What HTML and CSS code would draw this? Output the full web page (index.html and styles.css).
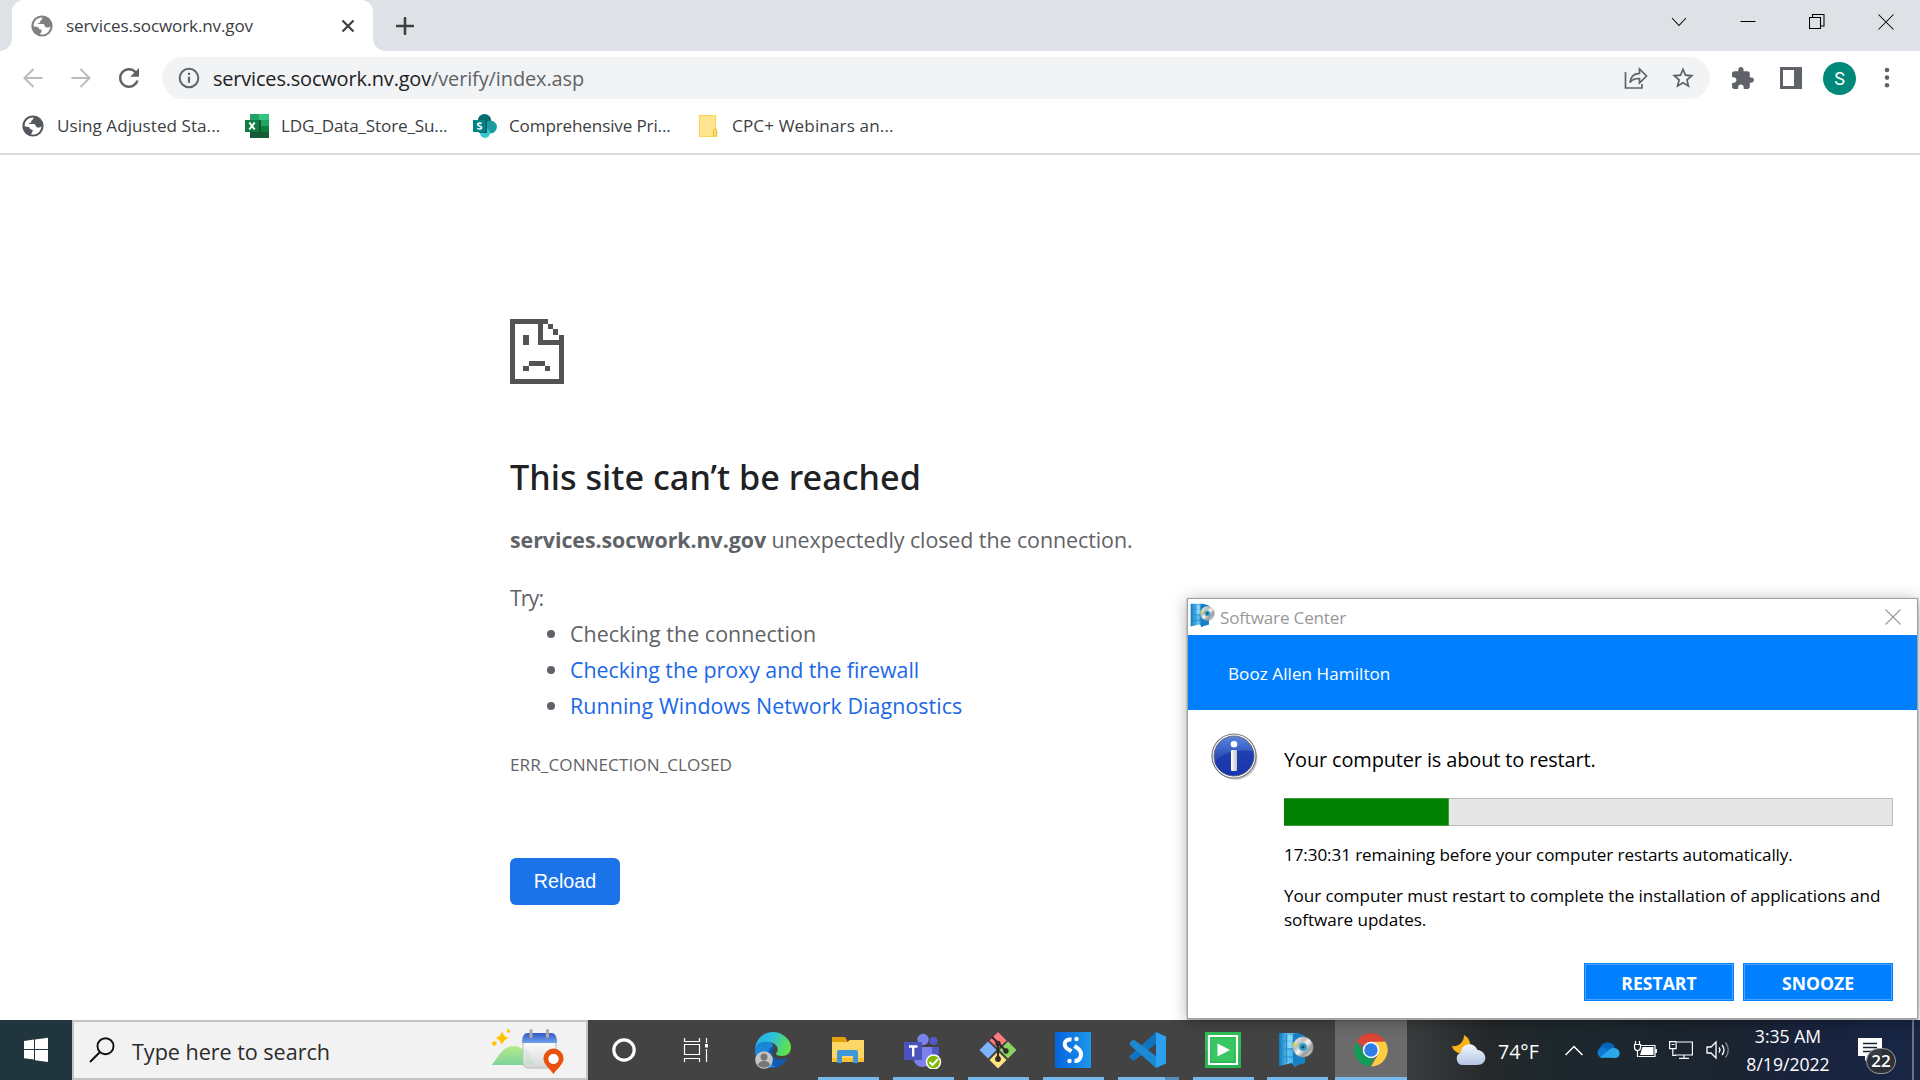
FILE: index.html
```
<!DOCTYPE html>
<html lang="en">
<head>
<meta charset="utf-8">
<title>services.socwork.nv.gov</title>
<link rel="stylesheet" href="styles.css">
</head>
<body>
<svg class="defs" width="0" height="0" aria-hidden="true">
  <defs>
    <symbol id="globe" viewBox="0 0 22 22">
      <circle cx="11" cy="11" r="10.6" fill="currentColor"/>
      <path fill="#fff" d="M2.6 11.3C2.5 6.4 6.2 2.7 10.8 2.6c1 .4.6 1.500-.2 2.200L9.200 6v1.700H7.700L6.600 9h5.200c1.300 0 1.800.9 1.800 2.100l1.600 1.300h2.200c.9 0 1.500-.6 2-1.200-.2 4.800-3.700 8.300-8.400 8.300-.9 0-1.600-.1-1.900-.3.300-1.800 1.500-1.500 1.500-3v-1.500c-1.900 0-3.200-.9-3.200-2.400z"/>
    </symbol>
    <linearGradient id="server" x1="0" x2="1"><stop offset="0" stop-color="#0a78bd"/><stop offset=".35" stop-color="#63c3f0"/><stop offset="1" stop-color="#1585cd"/></linearGradient>
    <linearGradient id="disc" x1="0" y1="0" x2="1" y2="1"><stop offset="0" stop-color="#fff"/><stop offset=".35" stop-color="#b9bbbd"/><stop offset=".5" stop-color="#f5f5f5"/><stop offset=".7" stop-color="#989b9e"/><stop offset="1" stop-color="#f0f0f0"/></linearGradient>
    <symbol id="software" viewBox="0 0 36 36">
      <path fill="url(#server)" d="M1 1h18l8 3v27l-8 2-2 2-3-4L1 34z"/>
      <path fill="#1580c6" d="M15 2l4-1 8 3v27l-8 2-2 2-2-4z"/>
      <path stroke="#1f8fcf" stroke-width="1.200" fill="none" d="M2 9h13M2 17h13M2 25h13M8.500 2v29"/>
      <path fill="#bdebff" d="M9.500 3h5v13h-5z" opacity=".5"/>
      <circle cx="25" cy="15" r="10.200" fill="url(#disc)" stroke="#8d9194" stroke-width=".6"/>
      <path fill="#c8e22e" d="M15.500 11l4 1-1 2-3.500 0z"/>
      <circle cx="25" cy="15" r="4" fill="#31a0c9"/><circle cx="25" cy="15" r="1.600" fill="#1c4c66"/>
    </symbol>
  </defs>
</svg>

<div class="browser">
  <header class="tabstrip">
    <div class="tab">
      <svg class="tab-icon" width="22" height="22"><use href="#globe"/></svg>
      <span class="tab-title">services.socwork.nv.gov</span>
      <svg class="tab-close" width="14" height="14" viewBox="0 0 14 14"><path d="M1.500 1.500l11 11m0-11l-11 11" stroke="#3c4043" stroke-width="2.200"/></svg>
    </div>
    <svg class="new-tab" width="18" height="18" viewBox="0 0 18 18"><path d="M9 1v16M1 9h16" stroke="#3c4043" stroke-width="2.600" stroke-linecap="round"/></svg>
    <div class="window-controls">
      <svg width="16" height="16" viewBox="0 0 16 16"><path d="M1 4l7 7.500L15 4"/></svg>
      <svg width="16" height="16" viewBox="0 0 16 16"><path d="M.5 7.500h15"/></svg>
      <svg width="16" height="16" viewBox="0 0 16 16"><path d="M.5 3.500h11v11H.5zM3.500 3.500v-3h11.500v11.500h-3.500"/></svg>
      <svg width="16" height="16" viewBox="0 0 16 16"><path d="M.5.5l15 15m0-15l-15 15"/></svg>
    </div>
  </header>

  <div class="toolbar">
    <div class="nav">
      <svg width="20" height="20" viewBox="0 0 20 20" fill="none" stroke="#b9bbbe" stroke-width="2"><path d="M19.500 10H2M10.500 1L1.500 10l9 9"/></svg>
      <svg width="20" height="20" viewBox="0 0 20 20" fill="none" stroke="#b9bbbe" stroke-width="2"><path d="M.5 10H18M9.500 1l9 9-9 9"/></svg>
      <svg width="30" height="30" viewBox="0 0 24 24"><path fill="#5f6368" d="M17.650 6.350C16.200 4.900 14.210 4 12 4c-4.420 0-7.990 3.580-7.990 8s3.570 8 7.990 8c3.730 0 6.840-2.550 7.730-6h-2.080c-.82 2.330-3.040 4-5.650 4-3.310 0-6-2.690-6-6s2.690-6 6-6c1.660 0 3.140.69 4.220 1.780L13 11h7V4l-2.350 2.350z"/></svg>
    </div>
    <div class="omnibox">
      <svg width="22" height="22" viewBox="0 0 22 22"><circle cx="11" cy="11" r="9.300" fill="none" stroke="#5f6368" stroke-width="2"/><path d="M11 9.800v6M11 5.800v2.200" stroke="#5f6368" stroke-width="2.200"/></svg>
      <span class="url">services.socwork.nv.gov<span class="path">/verify/index.asp</span></span>
      <svg class="share" width="24" height="24" viewBox="0 0 24 24" fill="none" stroke="#5f6368" stroke-width="1.700"><path d="M1.500 6v16h16.500v-4M6 16.500C6.500 10.500 10 7.500 15.500 7.300V3l7 7-7 7v-4.500C11 12.300 8 13.500 6 16.500z"/></svg>
      <svg class="star" width="26" height="26" viewBox="0 0 24 24"><path fill="#5f6368" d="M22 9.240l-7.190-.62L12 2 9.190 8.630 2 9.240l5.460 4.730L5.820 21 12 17.270 18.180 21l-1.630-7.030L22 9.240zM12 15.400l-3.760 2.270 1-4.280-3.320-2.880 4.380-.38L12 6.100l1.710 4.040 4.380.38-3.320 2.880 1 4.280L12 15.400z"/></svg>
    </div>
    <div class="actions">
      <svg width="24" height="24" viewBox="1 0 23 23"><path fill="#5f6368" d="M20.500 11H19V7c0-1.100-.9-2-2-2h-4V3.500C13 2.120 11.880 1 10.500 1S8 2.120 8 3.500V5H4c-1.100 0-1.990.9-1.990 2v3.800H3.500c1.490 0 2.700 1.210 2.700 2.700s-1.210 2.700-2.700 2.700H2V20c0 1.100.9 2 2 2h3.800v-1.500c0-1.490 1.210-2.700 2.700-2.700 1.490 0 2.700 1.210 2.700 2.700V22H17c1.100 0 2-.9 2-2v-4h1.500c1.380 0 2.500-1.120 2.500-2.500S21.880 11 20.500 11z"/></svg>
      <svg width="22" height="22" viewBox="0 0 22 22"><path fill="#5f6368" d="M0 0h22v22H0z"/><path fill="#fff" d="M3 3h11v16H3z"/></svg>
      <span class="avatar">S</span>
      <svg width="22" height="22" viewBox="0 0 22 22" fill="#5f6368"><circle cx="11" cy="3" r="2.300"/><circle cx="11" cy="10.600" r="2.300"/><circle cx="11" cy="18.200" r="2.300"/></svg>
    </div>
  </div>

  <nav class="bookmarks">
    <a class="bookmark"><svg class="dark-globe" width="24" height="22" viewBox="0 0 24 22"><use href="#globe" x="1" width="22" height="22"/></svg><span>Using Adjusted Sta...</span></a>
    <a class="bookmark tight"><svg width="24" height="24" viewBox="0 0 24 24"><path fill="#21a366" d="M5 0h9v6H5z"/><path fill="#33c481" d="M14 0h10v6H14z"/><path fill="#107c41" d="M5 6h9v12H5z"/><path fill="#21a366" d="M14 6h10v6H14z"/><path fill="#107c41" d="M14 12h10v6H14z"/><path fill="#185c37" d="M5 18h19v6H5z"/><path fill="#0b5a2d" d="M5 6h11v13H5z"/><path fill="#107c41" d="M0 6h14v12H0z"/><path d="M4.300 8.500l5.400 7m0-7l-5.400 7" stroke="#fff" stroke-width="2"/></svg><span>LDG_Data_Store_Su...</span></a>
    <a class="bookmark tight"><svg width="24" height="24" viewBox="0 0 24 24"><circle cx="11.500" cy="6.800" r="6.800" fill="#036c70"/><circle cx="17.500" cy="13" r="6.400" fill="#1a9ba1"/><circle cx="12" cy="19" r="5" fill="#37c6d0"/><path fill="#075f63" d="M6 6h8v13H6z"/><path fill="#038387" d="M0 6h12.500v12H0z"/><path d="M8.600 9.600C7.400 8.800 4.600 8.800 4.600 10.500c0 1.900 4 1.200 4 3.200 0 1.700-2.900 1.600-4.300.7" fill="none" stroke="#fff" stroke-width="1.600"/></svg><span>Comprehensive Pri...</span></a>
    <a class="bookmark wide"><svg width="24" height="24" viewBox="0 0 24 24"><path fill="#ffe591" stroke="#fcd757" stroke-width="1.200" d="M3.600 1.600h16v20.800h-16z"/><path fill="#f9e27f" stroke="#e9c038" stroke-width="1.200" d="M17.600 16.500q0-1.500 1.500-1.500t1.500 1.500v5.500h-3z"/></svg><span>CPC+ Webinars an...</span></a>
  </nav>

  <main class="error-page">
    <svg class="sad-page" width="55" height="65" viewBox="0 0 55 65" shape-rendering="crispEdges" fill="#535353"><path d="M0 0h38v5H5v55h44V26H28V5h5v16h16v-5h5v49H0zM38 5h5v5h-5zM43 10h5v6h-5zM13 16h6v10h-6zM19 42h16v5H19zM13 47h6v5h-6zM35 47h5v5h-5z"/></svg>
    <h1>This site can’t be reached</h1>
    <p class="summary"><strong>services.socwork.nv.gov</strong> unexpectedly closed the connection.</p>
    <p class="try">Try:</p>
    <ul>
      <li>Checking the connection</li>
      <li><a class="proxy">Checking the proxy and the firewall</a></li>
      <li><a class="diag">Running Windows Network Diagnostics</a></li>
    </ul>
    <p class="code">ERR_CONNECTION_CLOSED</p>
    <button class="reload">Reload</button>
  </main>
</div>

<section class="dialog">
  <div class="dialog-title">
    <svg width="25" height="25"><use href="#software"/></svg>
    <span>Software Center</span>
    <svg class="dialog-close" width="16" height="16" viewBox="0 0 16 16"><path d="M.5.5l15 15m0-15l-15 15" stroke="#999" stroke-width="1.100"/></svg>
  </div>
  <div class="dialog-org">Booz Allen Hamilton</div>
  <div class="dialog-body">
    <svg class="info" width="48" height="50" viewBox="0 0 48 50">
      <defs><linearGradient id="ib" x1="0" y1="0" x2="0" y2="1"><stop offset="0" stop-color="#5b85e0"/><stop offset=".5" stop-color="#2c51b8"/><stop offset="1" stop-color="#2036c0"/></linearGradient><linearGradient id="is"><stop offset="0" stop-color="#fff"/><stop offset="1" stop-color="#c4c4c4"/></linearGradient></defs>
      <ellipse cx="24.500" cy="25" rx="22" ry="22" fill="#000" opacity=".2"/>
      <circle cx="23" cy="23" r="22" fill="#fff" stroke="#777" stroke-width="1.200"/>
      <circle cx="23" cy="23" r="20" fill="url(#ib)" stroke="#666b80" stroke-width="1"/>
      <path d="M3.500 29C10 20 28 15 42.500 18.500A20 20 0 0 1 23 42.500C13 42.500 5 36 3.500 29z" fill="#1632a8" opacity=".65"/>
      <circle cx="23" cy="11.200" r="3.300" fill="#fff"/><rect x="20" y="17" width="6" height="21" rx="1" fill="url(#is)"/>
    </svg>
    <div class="dialog-content">
      <p class="headline">Your computer is about to restart.</p>
      <div class="progress"><div class="progress-fill"></div></div>
      <p class="remaining">17:30:31 remaining before your computer restarts automatically.</p>
      <p class="reason">Your computer must restart to complete the installation of applications and software updates.</p>
      <div class="dialog-buttons"><button>RESTART</button><button>SNOOZE</button></div>
    </div>
  </div>
</section>

<footer class="taskbar">
  <div class="start"><svg width="26" height="26" viewBox="0 0 26 26" fill="#fff"><path d="M1 4l10-1.400V12H1zM12 2.500L25 .8V12H12zM1 13h10v9.500L1 21.200zM12 13h13v12l-13-1.700z"/></svg></div>
  <div class="search">
    <svg width="26" height="26" viewBox="0 0 26 26" fill="none" stroke="#111" stroke-width="1.900"><circle cx="16.500" cy="9.200" r="8"/><path d="M11 15L1 25"/></svg>
    <span>Type here to search</span>
    <svg class="highlight" width="74" height="48" viewBox="0 0 74 48">
      <defs><linearGradient id="hill" x1="0" y1="0" x2="0" y2="1"><stop offset="0" stop-color="#b6ea8a"/><stop offset="1" stop-color="#7cd49a"/></linearGradient><linearGradient id="cal" x1="0" y1="0" x2="0" y2="1"><stop offset="0" stop-color="#3556c8"/><stop offset="1" stop-color="#6fa3ee"/></linearGradient><linearGradient id="paper" x1="0" y1="0" x2="0" y2="1"><stop offset="0" stop-color="#fff"/><stop offset="1" stop-color="#d6d6d6"/></linearGradient></defs>
      <path fill="url(#hill)" d="M0 38C9 24 14 19 22 19s15 8 22 19z"/>
      <rect x="31" y="13" width="33" height="28" rx="5" fill="url(#paper)" stroke="#bcbcbc"/>
      <path d="M33 20c4 6 7 11 10 18H33z" fill="#a9e0b4" opacity=".3"/>
      <path fill="url(#cal)" d="M30 16c0-7 2-10 6-10h23c4 0 6 3 6 10z"/>
      <path d="M39 3.500v6M55.500 3.500v6" stroke="#a9a9a9" stroke-width="3.200" stroke-linecap="round"/>
      <path fill="#ffc400" d="M10 4q1.500 6 7 7-5.500 1.500-7 7-1.500-5.500-7-7 5.500-1 7-7z"/><circle cx="16.500" cy="4" r="1.700" fill="#ffc400"/><circle cx="2.300" cy="16.500" r="2.300" fill="#ffc400"/>
      <path fill="#e8520e" fill-rule="evenodd" d="M61.500 47C57 41 51.500 37 51.500 31.500a10 10 0 0 1 20 0C71.500 37 66 41 61.500 47zm0-20a5 5 0 1 0 0 10 5 5 0 0 0 0-10z"/><circle cx="61.500" cy="32" r="5" fill="#fff"/>
    </svg>
  </div>
  <div class="slot"><svg width="24" height="24" viewBox="0 0 24 24"><circle cx="12" cy="12" r="10.200" fill="none" stroke="#fff" stroke-width="3.200"/></svg></div>
  <div class="slot"><svg width="26" height="26" viewBox="0 0 26 26" fill="none" stroke="#fff" stroke-width="1.200"><path d="M1.500 1v3.500h15V1M1.500 7.500h15v10h-15zM1.500 25v-3.500h15V25M23.500 1v5M23.500 12v13"/><path fill="#fff" stroke="none" d="M22 7h3v3.500h-3z"/></svg></div>
  <div class="apps">
    <div class="app"><svg width="38" height="38" viewBox="0 0 38 38">
      <defs><linearGradient id="ed" x1="0" x2="1" y2=".3"><stop offset="0" stop-color="#2aa9ee"/><stop offset=".5" stop-color="#2bbfdc"/><stop offset="1" stop-color="#5fe04f"/></linearGradient></defs>
      <path fill="#0f5bb5" d="M1 19C1 9 9 9 14 10l6 6c-5 8 1 16 14 11-5 7-10 10-16 10C8 37 1 29 1 19z"/>
      <path fill="#1a86d8" d="M1 20c0-7 6-10 11-10 4 0 7 2 7 5-6 2-7 14 2 21C9 38 1 30 1 20z"/>
      <path fill="url(#ed)" d="M1 18C2 8 9 1 19 1c10 0 18 8 18 15 0 6-4 9-9 9-6 0-7-2-5-4 2-3 0-9-8-10C8 10 3 12 1 18z"/>
      <circle cx="10" cy="29" r="8.800" fill="#c7c5c2"/><circle cx="10" cy="26" r="3.500" fill="#777"/><path fill="#777" d="M4 34.500c0-6 12-6 12 0-3 2.800-9 2.800-12 0z"/></svg></div>
    <div class="app running"><svg width="34" height="28" viewBox="0 0 34 28"><path fill="#e3a008" d="M1 1h13l2 3v5H1z"/><path fill="#ffd767" d="M1 6h15l3-2h14v22H1z"/><path fill="#fbc02d" d="M1 22h32v4H1z"/><path fill="#3e98d9" d="M6 27V16q0-2 2-2h17q2 0 2 2v11h-5v-7H11v7z"/></svg></div>
    <div class="app running"><svg width="40" height="38" viewBox="0 0 40 38">
      <circle cx="30.500" cy="10" r="4" fill="#5059c9"/><circle cx="20" cy="8.500" r="5.700" fill="#7b83eb"/><path fill="#5059c9" d="M26 16h10v11q-3 6-10 4z"/><path fill="#7b83eb" d="M11 16h18v12c0 10-18 11-18 0z"/><path fill="#4b53bc" d="M1 11h18v18H1z"/><path d="M6 15.500h8.500M10.200 15.500v10" stroke="#fff" stroke-width="2.400"/><circle cx="30.500" cy="31" r="7" fill="#7fba00" stroke="#fff" stroke-width="1.500"/><path d="M26.500 31l3 3 5.500-6" stroke="#fff" stroke-width="2" fill="none"/></svg></div>
    <div class="app running"><svg width="38" height="38" viewBox="0 0 38 38">
      <path fill="#ff7a7d" d="M19 1l8.500 8.500-8.500 8-8.500-8z"/><path fill="#80b3ff" d="M9 10.500l8.500 8.500L9 27.500.5 19z"/><path fill="#ffe680" d="M19 20.500l8.500 8.500-8.500 8.500-8.500-8.500z"/><path fill="#8dd35f" d="M29 10.500l8.500 8.500-8.500 8.500-8.500-8.500z"/><path stroke="#2f2a2b" stroke-width="2.200" fill="none" d="M13 6l6 6v17M19 12l8 8"/><g fill="#2f2a2b"><circle cx="19" cy="12.500" r="2.700"/><circle cx="27" cy="20" r="2.700"/><circle cx="19" cy="28" r="2.900"/></g></svg></div>
    <div class="app running"><svg width="36" height="36" viewBox="0 0 36 36"><defs><linearGradient id="st" x1="0" x2="1"><stop offset="0" stop-color="#0664dd"/><stop offset="1" stop-color="#1d97ec"/></linearGradient></defs><path fill="url(#st)" d="M0 0h36v36H0z"/><path d="M16.500 7.500c-9-1-8 8-3 10l3 1.800M19.500 14l3.500 2.500c6 5 2 13-3.500 12.500" fill="none" stroke="#fff" stroke-width="4"/><circle cx="21.500" cy="7" r="2.200" fill="#fff"/><circle cx="14.500" cy="29" r="2.200" fill="#fff"/></svg></div>
    <div class="app running split"><svg width="38" height="38" viewBox="0 0 38 38"><path fill="#0f74bd" d="M27 1v12L6 29q-1.500 1-3 0l-2-2q-1-1.500 0-2.500z"/><path fill="#1b8ad3" d="M27 37V25L6 9.500q-1.500-1-3 0l-2 2q-1 1.500 0 2.500z"/><path fill="#2c9fee" d="M27 1l10 4.500v27L27 37z"/></svg></div>
    <div class="app running"><svg width="36" height="36" viewBox="0 0 36 36"><path fill="#2dbe56" d="M0 0h36v36H0z"/><path fill="#24a94a" d="M0 18h36v18H0z" opacity=".5"/><path fill="none" stroke="#fff" stroke-width="2.200" d="M4 4h28v28H4z"/><path fill="#38c763" d="M6.500 6.500h23v23h-23z"/><path fill="#fff" d="M12.500 11.500L25 18l-12.500 6.500z"/></svg></div>
    <div class="app running software"><svg width="36" height="36"><use href="#software"/></svg></div>
    <div class="app active"><svg width="34" height="34" viewBox="0 0 34 34"><path fill="#db4437" d="M17 17L2.600 8.700A16.600 16.600 0 0 1 31.400 8.700z"/><path fill="#ffcd40" d="M17 8.700h14.400A16.600 16.600 0 0 1 17 33.600l7-12z"/><path fill="#0f9d58" d="M2.600 8.700L10 21l7 4.500 3-.5-4.500 8.500A16.600 16.600 0 0 1 2.600 8.700z"/><circle cx="17" cy="17" r="8.300" fill="#fff"/><circle cx="17" cy="17" r="6.700" fill="#2f7de9"/></svg></div>
  </div>
  <div class="weather">
    <svg width="34" height="31" viewBox="0 0 34 31"><defs><linearGradient id="cl" x1="0" y1="0" x2="0" y2="1"><stop offset="0" stop-color="#f2f6fc"/><stop offset="1" stop-color="#b3c5e4"/></linearGradient></defs><path fill="#f9b517" d="M12 0c8 4 8 14 1 18C7 20 1 16 0 11c7 1 12-4 12-11z"/><path fill="url(#cl)" d="M10 30a6.500 6.500 0 0 1-1-12.500C9 8 22 6 25.500 15c10 1 11 15-.5 15z"/></svg>
    <span>74°F</span>
  </div>
  <div class="tray">
    <svg width="18" height="11" viewBox="0 0 18 11" fill="none" stroke="#fff" stroke-width="1.500"><path d="M.5 10L9 1.500 17.500 10"/></svg>
    <svg width="24" height="16" viewBox="0 0 24 16"><path fill="#0364b8" d="M4 6C6-1 16-1 19 5l-8 6z"/><path fill="#0f78d4" d="M6 16a5.500 5.500 0 0 1-1-10.500c5-1 8 3 15 8z"/><path fill="#28a8ea" d="M4 15.500L14 7c4-2 5-1 5.500-.5 5 0 6 9 0 9.500z"/></svg>
    <svg width="24" height="18" viewBox="0 0 24 18" fill="none" stroke="#fff" stroke-width="1.200"><path d="M8 4.500h14v11H5.500M23.300 8v4M1.500 3.500h6v3q0 3-3 3t-3-3zM2.500 0v3M6.500 0v3M4.500 9.500V16"/><path fill="#fff" stroke="none" d="M9.500 6H20.500v8H7z"/></svg>
    <svg width="24" height="18" viewBox="0 0 24 18" fill="none" stroke="#fff" stroke-width="1.200"><path d="M8 1h15.400v13H5.500M.6.600h6.500v7H.6zM2.500 3.500h3M3.800 8v6.500H7M15 14v3M10 17.300h10"/></svg>
    <svg width="24" height="20" viewBox="0 0 24 20" fill="none" stroke="#fff" stroke-width="1.300"><path d="M1 7h4l5-5v16l-5-5H1z"/><path d="M13 7.500q2 2.500 0 5M16 5q4 5 0 10"/><path opacity=".45" d="M19.500 2.500q5.500 7.500 0 15"/></svg>
  </div>
  <div class="clock"><span>3:35 AM</span><span>8/19/2022</span></div>
  <div class="notifications">
    <svg width="24" height="24" viewBox="0 0 24 24"><path fill="#fff" d="M0 0h24v18H12l-5 5v-5H0z"/><path d="M5 5.500h14M5 9.500h14M5 13.500h9" stroke="#1a2238" stroke-width="1.300"/></svg>
    <span class="badge">22</span>
  </div>
  <div class="show-desktop"></div>
</footer>
</body>
</html>
```
FILE: styles.css
```
* { box-sizing: border-box; }
body {
  margin: 0;
  width: 1920px;
  height: 1080px;
  overflow: hidden;
  display: flex;
  flex-direction: column;
  background: #fff;
  font-family: "Open Sans", "Noto Sans", sans-serif;
  font-size: 17.1px;
  color: #3c4043;
}
svg { display: block; flex: none; }
.defs { position: absolute; }
p, h1, ul { margin: 0; padding: 0; }
span, p, h1 { white-space: nowrap; }

.browser { flex: 1; display: flex; flex-direction: column; min-height: 0; }

/* Tab strip */
.tabstrip { height: 51px; display: flex; align-items: center; background: #dee1e6; padding-left: 12px; }
.tab {
  width: 361px;
  height: 51px;
  display: flex;
  align-items: center;
  padding-left: 19px;
  background: #fff;
  border-radius: 12px 12px 0 0;
  position: relative;
}
.tab::before, .tab::after {
  content: "";
  position: absolute;
  bottom: 0;
  width: 12px;
  height: 12px;
}
.tab::before { left: -12px; background: radial-gradient(circle at 0 0, transparent 11.5px, #fff 12px); }
.tab::after { right: -12px; background: radial-gradient(circle at 100% 0, transparent 11.5px, #fff 12px); }
.tab-icon { color: #808080; }
.tab-title { margin-left: 13px; width: 275px; letter-spacing: -0.14px; }
.new-tab { margin-left: 23px; }
.window-controls { margin-left: auto; display: flex; gap: 53px; padding: 0 26px 8px 0; }
.window-controls path { fill: none; stroke: #000; stroke-width: 1.05; }

/* Toolbar */
.toolbar { height: 54px; display: flex; align-items: center; }
.nav { display: flex; align-items: center; width: 162px; padding-left: 23px; gap: 28px; }
.nav svg:last-child { margin-left: -5px; }
.omnibox {
  width: 1548px;
  height: 42px;
  border-radius: 21px;
  background: #f1f3f4;
  display: flex;
  align-items: center;
  padding: 0 14px 0 16px;
}
.url { margin-left: 13px; font-size: 19.95px; letter-spacing: -0.17px; color: #202124; }
.path { color: #5f6368; letter-spacing: -0.1px; }
.share { margin-left: auto; }
.star { margin-left: 22px; }
.actions { display: flex; align-items: center; padding-left: 21px; }
.actions svg:nth-child(2) { margin-left: 25px; }
.avatar {
  width: 33px;
  height: 33px;
  margin: 0 20px 0 21px;
  border-radius: 50%;
  background: #00897b;
  color: #fff;
  font: 18px/33px Roboto, sans-serif;
  text-align: center;
}

/* Bookmarks bar */
.bookmarks {
  height: 50px;
  display: grid;
  grid-template-columns: 224px 228px 223px auto;
  align-items: center;
  padding: 0 0 6px 21px;
  border-bottom: 2px solid #d9d9d9;
}
.bookmark { display: flex; align-items: center; gap: 12px; letter-spacing: 0.04px; }
.bookmark span { padding-bottom: 2px; }
.bookmark.tight { letter-spacing: -0.15px; }
.bookmark.wide { letter-spacing: 0.13px; }
.dark-globe { color: #55585c; }

/* Error page */
.error-page {
  flex: 1;
  display: flex;
  flex-direction: column;
  align-items: flex-start;
  padding: 164px 0 0 510px;
  font-size: 21.4px;
  line-height: 36px;
  color: #5f6368;
}
h1 { margin-top: 71px; font-family: "Noto Sans", "Open Sans", sans-serif; font-size: 34.2px; line-height: 44px; font-weight: 500; letter-spacing: 0.02px; color: #202124; }
.summary { margin-top: 23px; letter-spacing: -0.06px; }
.try { margin-top: 22px; letter-spacing: -0.95px; }
.error-page ul { list-style: none; padding-left: 37px; }
.error-page li { display: flex; align-items: center; gap: 15px; letter-spacing: 0.06px; }
.error-page li::before { content: ""; width: 8px; height: 8px; border-radius: 50%; background: #5f6368; }
.error-page a { color: #1a68e8; }
.error-page .proxy { letter-spacing: -0.05px; }
.error-page .diag { letter-spacing: 0.08px; }
.code { margin-top: 27px; font-size: 17.1px; line-height: 28px; letter-spacing: 0.08px; }
.reload {
  margin-top: 79px;
  width: 110px;
  height: 47px;
  border: 0;
  border-radius: 6px;
  background: #1a73e8;
  color: #fff;
  font: 19.7px "Liberation Sans", Arial, sans-serif;
}

/* Restart dialog, floating over the page */
.dialog {
  position: absolute;
  left: 1187px;
  top: 598px;
  width: 731px;
  height: 421px;
  background: #fff;
  border: 1px solid #a0a0a0;
  box-shadow: 0 1px 2px rgba(0,0,0,.3), 0 2px 15px rgba(0,0,0,.3);
  color: #000;
}
.dialog-title { height: 36px; display: flex; align-items: center; padding: 0 16px 0 2px; color: #999; letter-spacing: -0.19px; }
.dialog-title span { margin-left: 5px; }
.dialog-title > svg:first-child { margin-bottom: 3px; }
.dialog-close { margin: 0 0 1px auto; }
.dialog-org { height: 75px; line-height: 77px; padding-left: 40px; background: #0080ff; color: #fff; letter-spacing: 0.05px; }
.dialog-body { display: flex; padding: 23px 24px 0 24px; }
.info { margin-left: -1px; }
.dialog-content { flex: 1; margin-left: 25px; padding-top: 12px; line-height: 24px; }
.headline { font-size: 19.95px; line-height: 30px; letter-spacing: -0.13px; }
.progress { height: 28px; margin-top: 23px; background: #e6e6e6; border: 1px solid #bcbcbc; }
.progress-fill { width: 165px; height: 28px; margin: -1px; background: #008000; border: 1px solid #3d9c3d; border-left: 0; }
.remaining { margin-top: 17px; letter-spacing: -0.1px; }
.reason { margin-top: 17px; white-space: normal; letter-spacing: -0.06px; }
.dialog-buttons { display: flex; justify-content: flex-end; gap: 9px; margin-top: 31px; }
.dialog-buttons button {
  width: 150px;
  height: 38px;
  padding: 2px 0 0;
  border: 1px solid #0080ff;
  box-shadow: inset 0 0 0 1px #4aa3ff;
  background: #0080ff;
  color: #fff;
  font: 700 17.6px "Open Sans", sans-serif;
}

/* Taskbar */
.taskbar {
  height: 60px;
  display: flex;
  align-items: center;
  color: #fff;
  background: linear-gradient(90deg, #434343 0, #434343 1320px, #373a3b 1420px, #25282a 1490px, #1c282d 1560px, #1c2430 1720px, #19233d 1800px, #182645 1920px);
}
.start { width: 72px; height: 60px; padding: 17px 0 0 23px; background: #20353d; }
.search {
  width: 516px;
  height: 60px;
  display: flex;
  align-items: center;
  padding: 2px 20px 0 15px;
  border: 2px solid #c3c3c3;
  background: #f2f2f2;
  color: #2b2b2b;
  font-size: 21.6px;
}
.search svg:first-child { margin-bottom: 2px; }
.search span { margin-left: 17px; letter-spacing: -0.04px; }
.highlight { margin: 0 0 0 auto; }
.slot { width: 72px; display: flex; justify-content: center; }
.apps { display: flex; margin-left: 3px; }
.app { width: 75px; height: 60px; display: flex; align-items: center; justify-content: center; }
.running { background: linear-gradient(#76b9ed, #76b9ed) 8px 100% / 61px 3px no-repeat; }
.split { background-image: linear-gradient(90deg, #76b9ed 47px, #5a8db5 47px); }
.software { padding-right: 4px; background-position: 7px 100%; }
.active { width: 72px; background: linear-gradient(#76b9ed, #76b9ed) 0 100% / 100% 3px no-repeat, #6b6b6b; }
.weather { width: 149px; display: flex; align-items: center; padding-left: 45px; gap: 12px; font-size: 19.5px; }
.weather span { padding-top: 3px; }
.tray { display: flex; align-items: center; justify-content: space-between; width: 174px; padding-left: 9px; height: 60px; }
.clock { width: 116px; display: flex; flex-direction: column; align-items: center; line-height: 28px; font-size: 17.6px; }
.notifications { width: 66px; position: relative; padding-left: 12px; padding-bottom: 1px; }
.badge {
  position: absolute;
  left: 20px;
  top: 10px;
  width: 30px;
  height: 26px;
  border: 1px solid #9a9a9a;
  border-radius: 13px;
  background: rgba(45,48,55,.95);
  font-size: 17px;
  font-weight: 600;
  line-height: 23px;
  text-align: center;
}
.show-desktop { width: 8px; height: 60px; margin-left: auto; border-left: 2px solid #6c7384; }
```
